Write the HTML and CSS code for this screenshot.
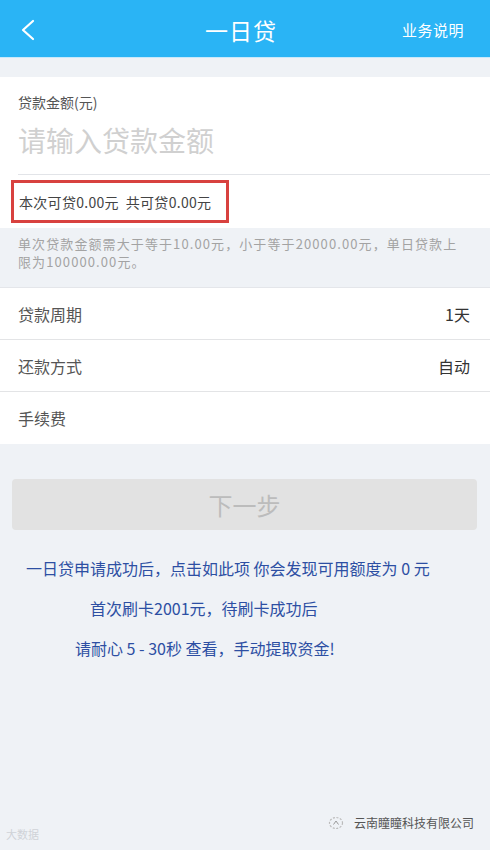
FILE: index.html
```html
<!DOCTYPE html>
<html lang="zh-CN">
<head>
    <meta charset="UTF-8">
    <meta name="viewport" content="width=device-width, initial-scale=1.0">
    <title>一日贷</title>
    <link rel="stylesheet" href="styles.css">
</head>
<body>
    <div class="page">
        <div class="header">
            <a class="back-btn" href="#">
                <svg width="16" height="22" viewBox="0 0 16 22">
                    <path d="M13 2 L3 11 L13 20" fill="none" stroke="#fff" stroke-width="2.2" stroke-linecap="round" stroke-linejoin="round"/>
                </svg>
            </a>
            <h1>一日贷</h1>
            <a class="header-link" href="#">业务说明</a>
        </div>

        <div class="amount-card">
            <div class="amount-label">贷款金额(元)</div>
            <input class="amount-input" type="text" placeholder="请输入贷款金额">
            <div class="quota-row">
                <div class="quota-box">本次可贷0.00元&nbsp;&nbsp;共可贷0.00元</div>
            </div>
        </div>

        <div class="note">单次贷款金额需大于等于10.00元，小于等于20000.00元，单日贷款上限为100000.00元。</div>

        <div class="list">
            <div class="list-row">
                <span class="list-label">贷款周期</span>
                <span class="list-value">1天</span>
            </div>
            <div class="list-row">
                <span class="list-label">还款方式</span>
                <span class="list-value">自动</span>
            </div>
            <div class="list-row">
                <span class="list-label">手续费</span>
                <span class="list-value"></span>
            </div>
        </div>

        <button class="next-btn" disabled>下一步</button>

        <div class="tips">
            <p class="tip tip-first">一日贷申请成功后，点击如此项 你会发现可用额度为 0 元</p>
            <p class="tip tip-second">首次刷卡2001元，待刷卡成功后</p>
            <p class="tip tip-third">请耐心 5 - 30秒 查看，手动提取资金!</p>
        </div>

        <div class="footer">
            <span class="watermark-left">大数据</span>
            <span class="watermark-right">
                <svg width="18" height="16" viewBox="0 0 18 16">
                    <ellipse cx="8" cy="8" rx="6.5" ry="5.5" fill="none" stroke="#bbb" stroke-width="1.2" stroke-dasharray="2 1.5"/>
                    <path d="M5.5 9.5 L8 6 L10.5 9.5" fill="none" stroke="#999" stroke-width="1"/>
                </svg>
                云南瞳瞳科技有限公司
            </span>
        </div>
    </div>
</body>
</html>
```

FILE: styles.css
```css
* {
    box-sizing: border-box;
}

body {
    margin: 0;
    font-family: "Noto Sans CJK SC", "Noto Sans", sans-serif;
    background-color: #eff2f6;
}

.page {
    min-height: 100vh;
    display: flex;
    flex-direction: column;
}

.header {
    height: 58px;
    background-color: #2ab4f5;
    border-bottom: 1px solid #c8e9fb;
    display: flex;
    align-items: center;
    justify-content: space-between;
    padding: 2px 26px 0 20px;
    color: white;
}

.back-btn {
    display: flex;
    align-items: center;
    width: 60px;
}

.header h1 {
    margin: 0;
    font-size: 23px;
    font-weight: normal;
    letter-spacing: 1px;
}

.header-link {
    color: white;
    text-decoration: none;
    font-size: 15px;
    letter-spacing: 0.5px;
}

.amount-card {
    margin-top: 19px;
    background-color: white;
    padding-left: 18px;
}

.amount-label {
    padding-top: 16px;
    font-size: 14px;
    color: #555;
    line-height: 18px;
}

.amount-input {
    display: block;
    width: 100%;
    border: none;
    outline: none;
    padding: 9px 0 14px;
    font-family: inherit;
    font-size: 28px;
    line-height: 40px;
    height: 64px;
    border-bottom: 1px solid #e2e4e8;
    background: transparent;
}

.amount-input::placeholder {
    color: #d0d0d0;
}

.quota-row {
    height: 53px;
    display: flex;
    align-items: center;
    margin-left: -7px;
}

.quota-box {
    width: 218px;
    height: 43px;
    border: 3px solid #d8413f;
    display: flex;
    align-items: center;
    padding-left: 5px;
    font-size: 14px;
    letter-spacing: 0.3px;
    color: #444;
}

.note {
    padding: 7px 28px 16px 18px;
    font-size: 13px;
    line-height: 18px;
    letter-spacing: 1.1px;
    color: #a3a3a3;
    border-bottom: 1px solid #e4e6ea;
}

.list {
    background-color: white;
}

.list-row {
    height: 52px;
    display: flex;
    align-items: center;
    justify-content: space-between;
    padding: 0 20px 0 18px;
    border-bottom: 1px solid #e3e4e6;
    font-size: 16px;
}

.list-row:last-child {
    border-bottom: none;
}

.list-label {
    color: #555;
}

.list-value {
    color: #333;
}

.next-btn {
    margin: 35px 13px 0 12px;
    height: 51px;
    border: none;
    border-radius: 4px;
    background-color: #e2e2e2;
    color: #bcbcbc;
    font-family: inherit;
    font-size: 24px;
}

.tips {
    padding-top: 18px;
}

.tip {
    margin: 0;
    height: 40px;
    line-height: 40px;
    font-size: 16px;
    color: #2d4fa3;
}

.tip-first {
    padding-left: 26px;
}

.tip-second {
    padding-left: 90px;
}

.tip-third {
    padding-left: 75px;
}

.footer {
    margin-top: auto;
    height: 50px;
    display: flex;
    justify-content: space-between;
    align-items: flex-start;
    padding: 14px 16px 0 6px;
}

.watermark-left {
    margin-top: 12px;
    font-size: 11px;
    color: #d0d3d8;
}

.watermark-right {
    display: flex;
    align-items: center;
    gap: 8px;
    font-size: 12px;
    color: #555;
}
```
